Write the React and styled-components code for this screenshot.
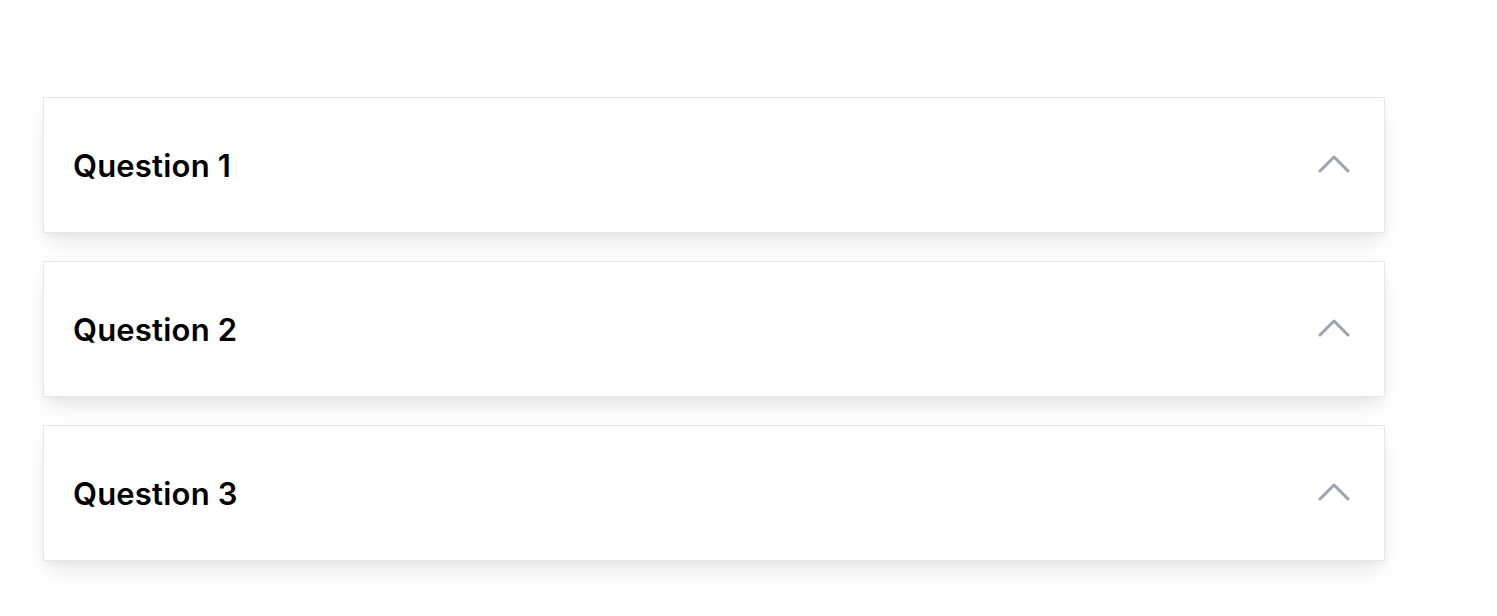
import React from "react";
import styled, { createGlobalStyle } from "styled-components";

const Global = createGlobalStyle`
  html, body { margin: 0; padding: 0; background: #ffffff; }
  body { font-family: Inter, "Noto Sans", sans-serif; }
`;

const Page = styled.div`
  padding: 97px 0 48px 43px;
`;

const List = styled.div`
  display: flex;
  flex-direction: column;
  gap: 28px;
  width: 1342px;
`;

const Card = styled.div`
  background: #ffffff;
  border: 1px solid #e5e7eb;
  box-shadow: 0 12px 22px -4px rgba(0, 0, 0, 0.1), 0 4px 10px -2px rgba(0, 0, 0, 0.04);
`;

const Header = styled.button`
  display: flex;
  align-items: center;
  justify-content: space-between;
  width: 100%;
  height: 134px;
  padding: 0 34px 0 29px;
  box-sizing: border-box;
  background: transparent;
  border: 0;
  cursor: pointer;
  font-family: inherit;
  text-align: left;
`;

const Title = styled.span`
  font-size: 31px;
  font-weight: 600;
  color: #000000;
  letter-spacing: 0.2px;
`;

const Chevron = () => (
  <svg width="32" height="20" viewBox="0 0 32 20" fill="none">
    <polyline
      points="2,16 16,2 30,16"
      stroke="#9ca3af"
      strokeWidth="3"
      strokeLinecap="round"
      strokeLinejoin="round"
    />
  </svg>
);

const items = ["Question 1", "Question 2", "Question 3"];

export default function App() {
  return (
    <>
      <Global />
      <Page>
        <List>
          {items.map((q) => (
            <Card key={q}>
              <Header>
                <Title>{q}</Title>
                <Chevron />
              </Header>
            </Card>
          ))}
        </List>
      </Page>
    </>
  );
}
